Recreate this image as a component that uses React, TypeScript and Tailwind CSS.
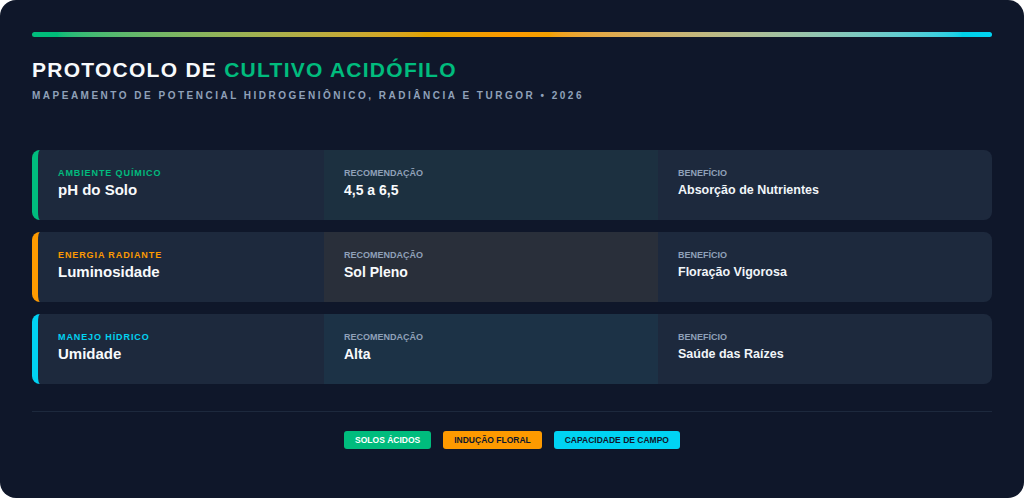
import React from "react";

interface Linha {
  categoria: string;
  titulo: string;
  recomendacao: string;
  beneficio: string;
  borda: string;
  rotulo: string;
  meio: string;
}

const linhas: Linha[] = [
  {
    categoria: "Ambiente Químico",
    titulo: "pH do Solo",
    recomendacao: "4,5 a 6,5",
    beneficio: "Absorção de Nutrientes",
    borda: "border-emerald-500",
    rotulo: "text-emerald-500",
    meio: "bg-emerald-500/5",
  },
  {
    categoria: "Energia Radiante",
    titulo: "Luminosidade",
    recomendacao: "Sol Pleno",
    beneficio: "Floração Vigorosa",
    borda: "border-amber-500",
    rotulo: "text-amber-500",
    meio: "bg-amber-500/5",
  },
  {
    categoria: "Manejo Hídrico",
    titulo: "Umidade",
    recomendacao: "Alta",
    beneficio: "Saúde das Raízes",
    borda: "border-cyan-400",
    rotulo: "text-cyan-400",
    meio: "bg-cyan-400/5",
  },
];

function CardLinha({ linha }: { linha: Linha }) {
  return (
    <div
      className={`grid grid-cols-[286px_1fr_1fr] h-[70px] rounded-lg overflow-hidden bg-slate-800 border-l-[6px] ${linha.borda}`}
    >
      <div className="px-5 pt-[17px] flex flex-col">
        <span className={`text-[9px] leading-[12px] font-bold uppercase tracking-[0.1em] ${linha.rotulo}`}>
          {linha.categoria}
        </span>
        <span className="text-[15px] leading-[18px] font-bold text-slate-50 mt-[2px]">{linha.titulo}</span>
      </div>
      <div className={`px-5 pt-[17px] flex flex-col ${linha.meio}`}>
        <span className="text-[9px] leading-[12px] font-semibold uppercase text-slate-400">Recomendação</span>
        <span className="text-[14px] leading-[18px] font-bold text-slate-50 mt-[2px]">{linha.recomendacao}</span>
      </div>
      <div className="px-5 pt-[17px] flex flex-col">
        <span className="text-[9px] leading-[12px] font-semibold uppercase text-slate-400">Benefício</span>
        <span className="text-[12.5px] leading-[18px] font-bold text-slate-100 mt-[2px]">{linha.beneficio}</span>
      </div>
    </div>
  );
}

export default function App() {
  return (
    <div className="bg-white w-[1024px] h-[498px]">
      <div
        className="w-[1024px] h-[498px] rounded-2xl bg-[#0f172a] px-8 pt-8"
        style={{ fontFamily: '"Liberation Sans", Arial, sans-serif' }}
      >
        <div className="h-[5px] rounded-sm bg-gradient-to-r from-emerald-500 via-amber-500 to-cyan-400" />

        <h1 className="mt-5 text-[21px] leading-[26px] font-bold tracking-[0.06em] text-slate-50">
          PROTOCOLO DE <span className="text-emerald-500">CULTIVO ACIDÓFILO</span>
        </h1>
        <p className="mt-[5px] text-[10px] leading-[15px] font-bold tracking-[0.25em] text-slate-400">
          MAPEAMENTO DE POTENCIAL HIDROGENIÔNICO, RADIÂNCIA E TURGOR • 2026
        </p>

        <div className="mt-[47px] flex flex-col gap-3">
          {linhas.map((l) => (
            <CardLinha key={l.titulo} linha={l} />
          ))}
        </div>

        <div className="mt-[27px] border-t border-slate-800" />

        <div className="mt-[19px] flex justify-center gap-3">
          <span className="h-[18px] px-[11px] flex items-center rounded-[3px] bg-emerald-500 text-white text-[8.5px] font-bold">
            SOLOS ÁCIDOS
          </span>
          <span className="h-[18px] px-[11px] flex items-center rounded-[3px] bg-amber-500 text-slate-900 text-[8.5px] font-bold">
            INDUÇÃO FLORAL
          </span>
          <span className="h-[18px] px-[11px] flex items-center rounded-[3px] bg-cyan-400 text-slate-900 text-[8.5px] font-bold">
            CAPACIDADE DE CAMPO
          </span>
        </div>
      </div>
    </div>
  );
}
